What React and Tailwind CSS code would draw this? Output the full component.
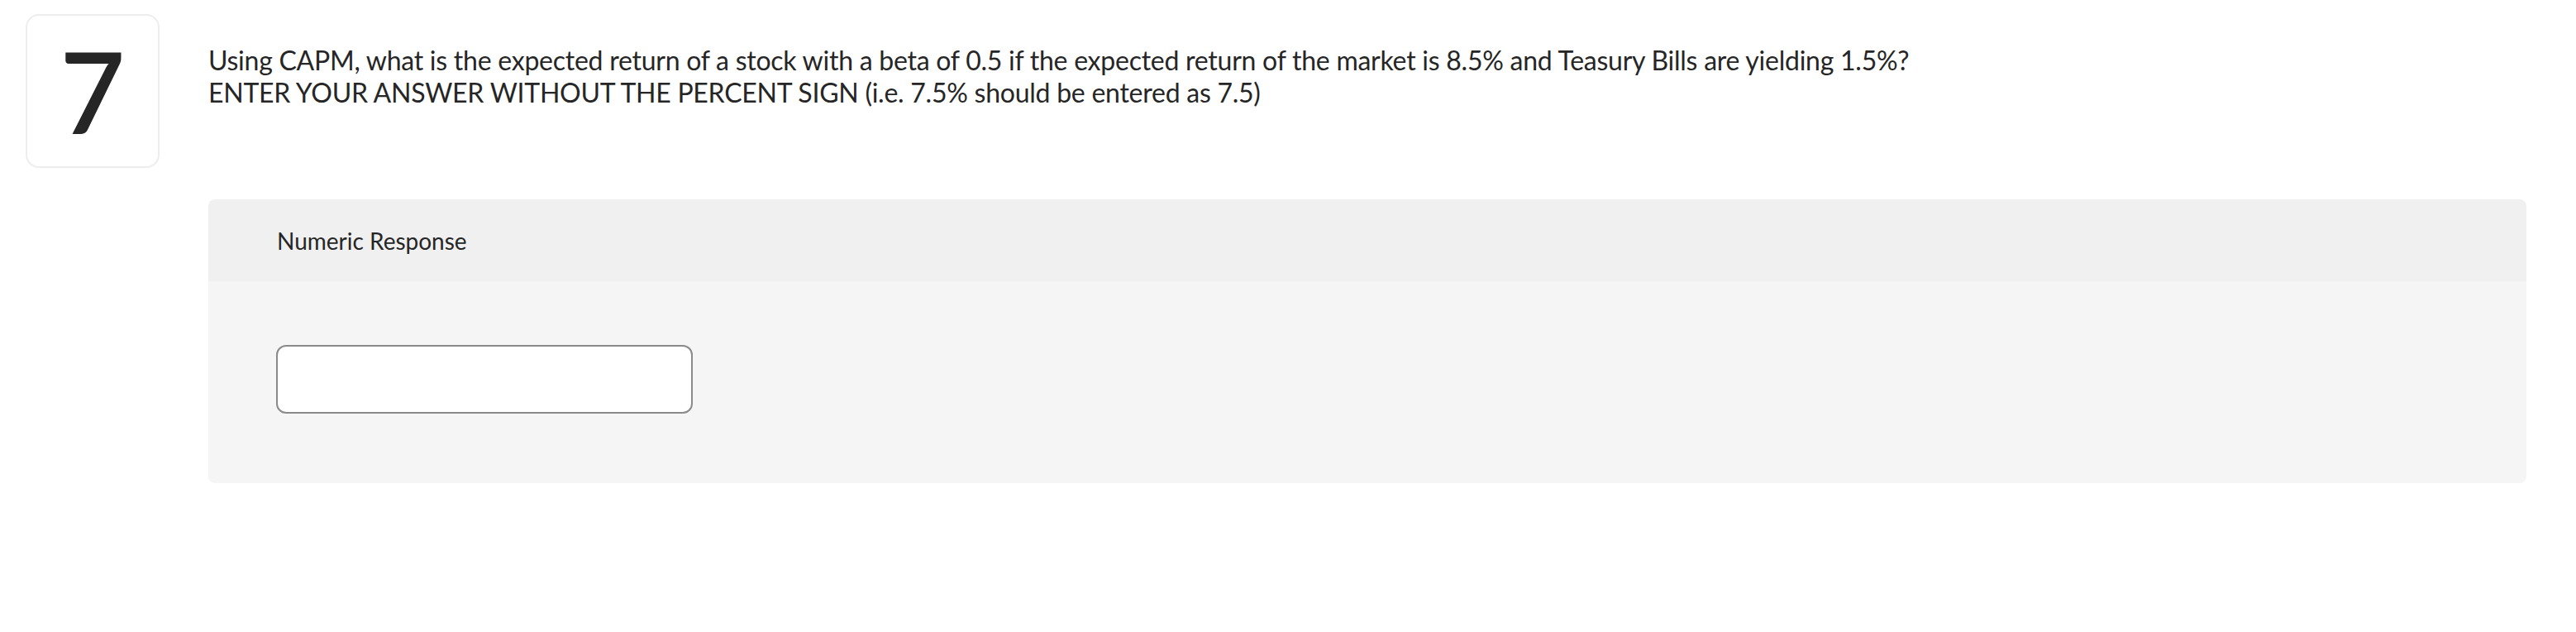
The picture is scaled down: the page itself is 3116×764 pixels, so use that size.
import React from 'react';

const App = () => {
    return (
        <div className="min-h-screen w-full bg-white font-['Lato','Open_Sans',sans-serif] text-[#262626]">
            <div className="flex items-start pl-[31px] pr-[60px] pt-[17px]">
                {/* question number */}
                <div className="flex h-[186px] w-[162px] shrink-0 items-center justify-center rounded-[16px] border-2 border-[#ededed]">
                    <span className="text-[136px] font-semibold leading-none text-[#262626]">7</span>
                </div>

                <div className="ml-[59px] flex-1">
                    <div className="pt-[36px] text-[32px] leading-[39px] tracking-[-0.25px] text-[#262626]">
                        <p>Using CAPM, what is the expected return of a stock with a beta of 0.5 if the expected return of the market is 8.5% and Teasury Bills are yielding 1.5%?</p>
                        <p>ENTER YOUR ANSWER WITHOUT THE PERCENT SIGN (i.e. 7.5% should be entered as 7.5)</p>
                    </div>

                    <div className="mt-[110px] overflow-hidden rounded-[8px]">
                        <div className="flex h-[99px] items-center bg-[#f0f0f0] pl-[83px]">
                            <span className="text-[28px] text-[#262626]">Numeric Response</span>
                        </div>
                        <div className="bg-[#f5f5f5] pl-[82px] pt-[77px] pb-[84px]">
                            <input
                                type="text"
                                className="block h-[83px] w-[504px] rounded-[12px] border-2 border-[#8a8a8a] bg-white px-4 text-[28px] outline-none"
                            />
                        </div>
                    </div>
                </div>
            </div>
        </div>
    );
};

export default App;
